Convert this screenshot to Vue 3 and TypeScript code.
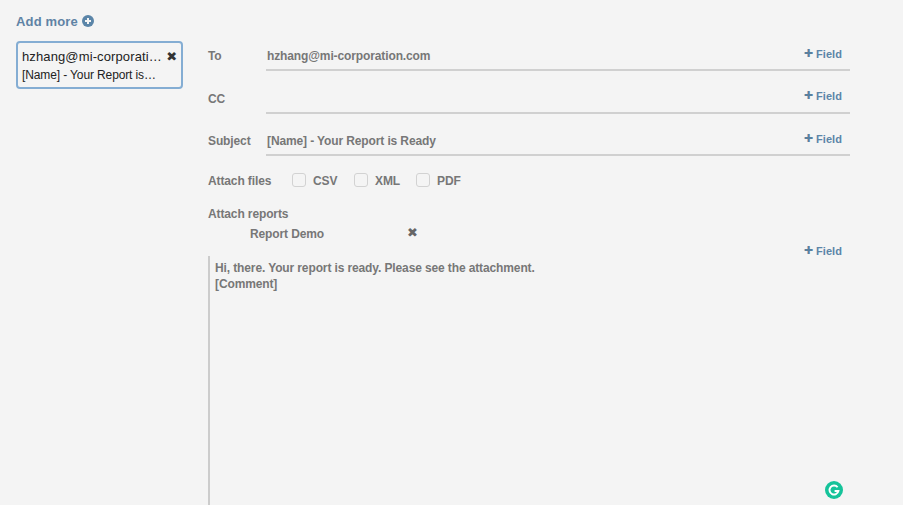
<template>
  <div class="page">
    <aside class="side">
      <a class="add-more">
        Add more
        <svg class="add-icon" viewBox="0 0 12 12" width="12" height="12">
          <circle cx="6" cy="6" r="6" fill="#5b85a8" />
          <path d="M6 3v6M3 6h6" stroke="#f4f4f4" stroke-width="2" />
        </svg>
      </a>
      <div class="card">
        <div class="card-top">
          <span class="card-mail">hzhang@mi-corporation.com</span>
          <span class="close dark">✖</span>
        </div>
        <div class="card-sub">[Name] - Your Report is Ready</div>
      </div>
    </aside>

    <main class="form">
      <div v-for="row in rows" :key="row.label" class="row">
        <label class="row-label">{{ row.label }}</label>
        <div class="row-input">
          <span>{{ row.value }}</span>
          <a class="field"><span class="plus">✚</span> Field</a>
        </div>
      </div>

      <div class="files">
        <span class="files-label">Attach files</span>
        <label v-for="f in files" :key="f" class="check">
          <span class="box"></span>{{ f }}
        </label>
      </div>

      <div class="reports-label">Attach reports</div>
      <div class="report">
        <span class="report-name">Report Demo</span>
        <span class="close report-close">✖</span>
      </div>
      <div class="body-field">
        <a class="field"><span class="plus">✚</span> Field</a>
      </div>
      <div class="editor">
        <div>Hi, there. Your report is ready. Please see the attachment.</div>
        <div>[Comment]</div>
      </div>
    </main>

    <svg class="grammarly" viewBox="0 0 18 18" width="18" height="18">
      <circle cx="9" cy="9" r="9" fill="#15c39a" />
      <path d="M12.6 6.3A4.5 4.5 0 1 0 13.4 10H9.6" fill="none" stroke="#fff" stroke-width="1.9" />
    </svg>
  </div>
</template>

<script setup lang="ts">
const rows = [
  { label: "To", value: "hzhang@mi-corporation.com" },
  { label: "CC", value: "" },
  { label: "Subject", value: "[Name] - Your Report is Ready" },
];

const files = ["CSV", "XML", "PDF"];
</script>

<style>
html,
body {
  margin: 0;
  background: #f4f4f4;
}
</style>

<style scoped>
.page {
  position: relative;
  display: flex;
  width: 903px;
  height: 505px;
  overflow: hidden;
  background: #f4f4f4;
  font-family: "Liberation Sans", Arial, sans-serif;
  font-size: 12px;
  font-weight: bold;
  letter-spacing: -0.12px;
  color: #777;
}

.side {
  width: 167px;
  margin-left: 16px;
  padding-top: 13px;
}

.add-more {
  display: flex;
  align-items: center;
  gap: 4px;
  height: 16px;
  font-size: 13px;
  letter-spacing: 0.15px;
  color: #5f83a5;
}

.card {
  box-sizing: border-box;
  width: 167px;
  height: 48px;
  margin-top: 12px;
  padding: 5px 4px 0;
  border: 2px solid #84add3;
  border-radius: 4px;
  font-weight: normal;
  color: #222;
}

.card-top {
  display: flex;
  align-items: center;
  gap: 2px;
}

.card-mail {
  flex: 1;
  min-width: 0;
  overflow: hidden;
  font-size: 13px;
  letter-spacing: 0.12px;
  line-height: 17px;
  white-space: nowrap;
  text-overflow: ellipsis;
}

.card-sub {
  width: 136px;
  margin-top: 3px;
  overflow: hidden;
  line-height: 15px;
  white-space: nowrap;
  text-overflow: ellipsis;
}

.close {
  font-family: "DejaVu Sans", sans-serif;
  font-size: 13px;
  line-height: 13px;
  color: #666;
}

.close.dark {
  color: #333;
}

.report-close {
  margin: -1px 0 0 -1px;
}

.form {
  width: 642px;
  margin-left: 25px;
  padding-top: 39px;
}

.row {
  display: flex;
  height: 32px;
  margin-bottom: 10.5px;
}

.row-label {
  width: 58px;
  padding-top: 10px;
  line-height: 14px;
}

.row-input {
  display: flex;
  flex: 1;
  align-items: flex-start;
  justify-content: space-between;
  padding: 10px 8px 0 1px;
  border-bottom: 2px solid #d0d0d0;
  line-height: 14px;
}

.field {
  display: inline-flex;
  align-items: center;
  gap: 3px;
  font-size: 11px;
  line-height: 14px;
  letter-spacing: 0.05px;
  color: #5b85a8;
}

.row-input .field {
  margin-top: -2.5px;
}

.plus {
  font-family: "DejaVu Sans", sans-serif;
  font-size: 11px;
  color: #5b7f9e;
}

.files {
  display: flex;
  align-items: center;
  height: 16px;
  margin-top: 16.5px;
}

.files-label {
  width: 84px;
}

.check {
  display: flex;
  align-items: center;
  width: 62px;
}

.box {
  box-sizing: border-box;
  width: 14px;
  height: 14px;
  margin: 0 7px 2px 0;
  border: 1px solid #d2d2d2;
  border-radius: 3px;
}

.reports-label {
  margin-top: 18px;
  line-height: 14px;
}

.report {
  display: flex;
  align-items: flex-start;
  height: 17px;
  margin-top: 6px;
  padding-left: 42px;
  line-height: 14px;
}

.report-name {
  width: 158px;
}

.body-field {
  display: flex;
  justify-content: flex-end;
  height: 14px;
  padding-right: 8px;
}

.editor {
  height: 250px;
  margin-top: -2px;
  padding: 4px 5px;
  border-left: 2px solid #ccc;
  line-height: 16px;
}

.grammarly {
  position: absolute;
  left: 825px;
  top: 481px;
}
</style>
